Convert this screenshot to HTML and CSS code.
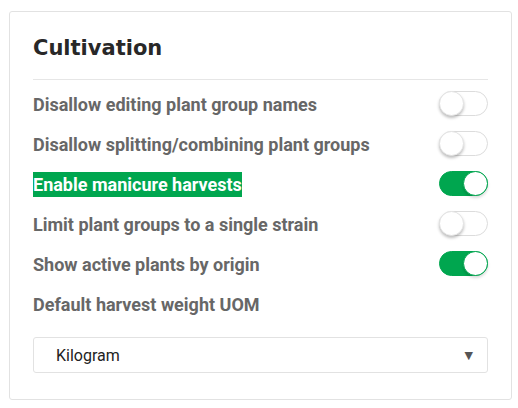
FILE: index.html
```html
<!DOCTYPE html>
<html>
<head>
<meta charset="utf-8">
<link rel="stylesheet" href="styles.css">
</head>
<body>
<div class="page">
  <section class="card">
    <h2 class="title">Cultivation</h2>
    <div class="rows">
      <div class="row">
        <span class="label">Disallow editing plant group names</span>
        <span class="toggle"><span class="knob"></span></span>
      </div>
      <div class="row">
        <span class="label">Disallow splitting/combining plant groups</span>
        <span class="toggle"><span class="knob"></span></span>
      </div>
      <div class="row">
        <span class="label selected">Enable manicure harvests</span>
        <span class="toggle on"><span class="knob"></span></span>
      </div>
      <div class="row">
        <span class="label">Limit plant groups to a single strain</span>
        <span class="toggle"><span class="knob"></span></span>
      </div>
      <div class="row">
        <span class="label">Show active plants by origin</span>
        <span class="toggle on"><span class="knob"></span></span>
      </div>
      <div class="row">
        <span class="label">Default harvest weight UOM</span>
      </div>
    </div>
    <div class="select">
      <span class="select-value">Kilogram</span>
      <span class="caret">&#9660;</span>
    </div>
  </section>
</div>
</body>
</html>
```
FILE: styles.css
```css
html, body {
  margin: 0;
  padding: 0;
  background: #ffffff;
}
.page {
  padding: 11px 6px 7px 9px;
}
.card {
  border: 1px solid #e2e2e2;
  border-radius: 3px;
  padding: 0 23px 26px 23px;
  height: 361px;
}
.title {
  margin: 0;
  padding-top: 23px;
  height: 44px;
  font-family: "DejaVu Sans", sans-serif;
  font-weight: 700;
  font-size: 21px;
  line-height: 26px;
  color: #282828;
  border-bottom: 1px solid #e6e6e6;
}
.rows {
  margin-top: 3px;
  display: flex;
  flex-direction: column;
}
.row {
  height: 40px;
  display: flex;
  align-items: center;
  justify-content: space-between;
}
.label {
  font-family: Roboto, "Liberation Sans", sans-serif;
  font-weight: 700;
  font-size: 18px;
  line-height: 25px;
  color: #676767;
  position: relative;
  top: 1px;
}
.label.selected {
  background: #00a64f;
  color: #ffffff;
}
.toggle {
  width: 49px;
  height: 25px;
  box-sizing: border-box;
  border: 1px solid #dcdcdc;
  border-radius: 13px;
  background: #ffffff;
  position: relative;
  display: block;
}
.knob {
  position: absolute;
  top: -1px;
  left: -1px;
  width: 25px;
  height: 25px;
  box-sizing: border-box;
  border-radius: 50%;
  background: #ffffff;
  border: 1px solid #e4e4e4;
  box-shadow: 0 2px 3px rgba(0,0,0,0.25);
}
.toggle.on {
  background: #00a64f;
  border-color: #00a64f;
}
.toggle.on .knob {
  left: auto;
  right: -1px;
  border: 1px solid #00a64f;
  box-shadow: 0 2px 3px rgba(0,0,0,0.15);
}
.select {
  margin-top: 14px;
  height: 36px;
  box-sizing: border-box;
  border: 1px solid #e2e2e2;
  border-radius: 3px;
  display: flex;
  align-items: center;
  justify-content: space-between;
  padding: 0 14px 0 22px;
}
.select-value {
  font-family: Roboto, "Liberation Sans", sans-serif;
  font-size: 16px;
  color: #222222;
}
.caret {
  font-family: "DejaVu Sans", sans-serif;
  font-size: 11px;
  color: #555555;
}
```
